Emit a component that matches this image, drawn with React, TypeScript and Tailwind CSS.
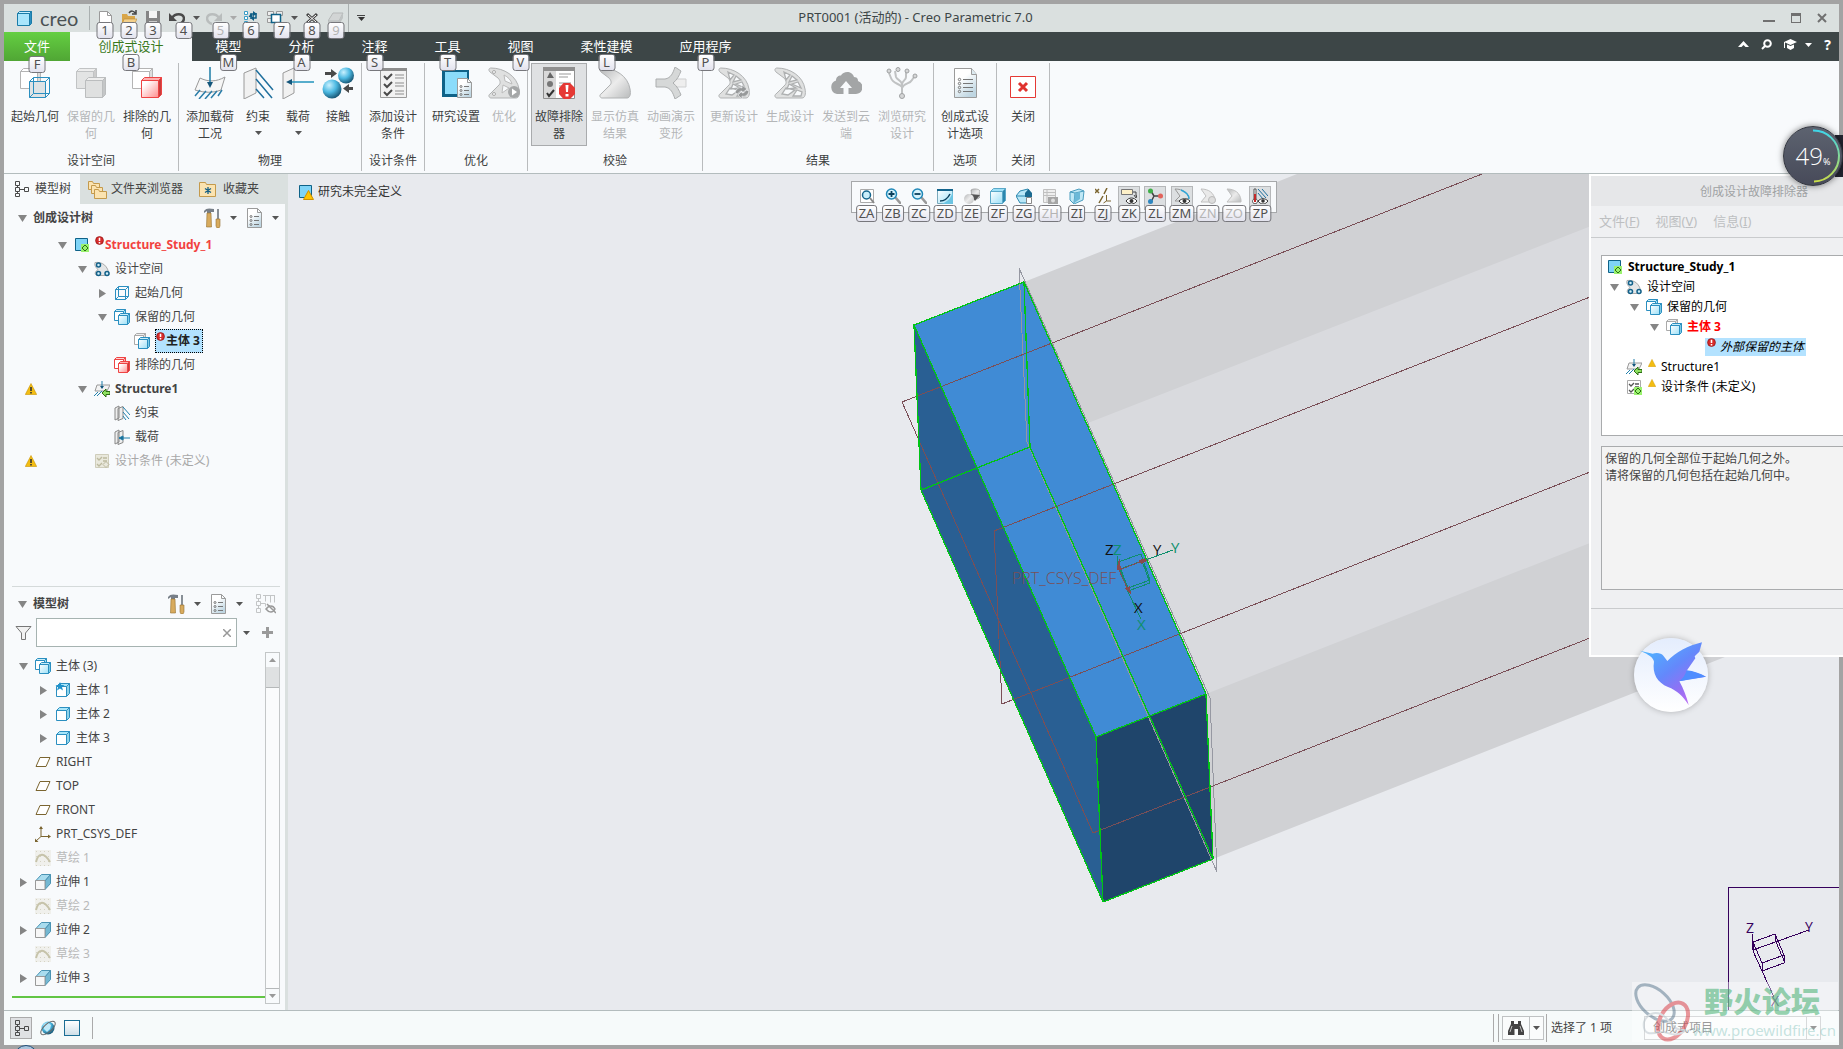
import type { ReactNode } from "react";
import { useState } from "react";
import { clsx } from "clsx";

/* ---------- small building blocks ---------- */

const Svg = ({ size = 16, children }: { size?: number; children: ReactNode }) => (
  <svg
    width={size}
    height={size}
    viewBox={`0 0 ${size} ${size}`}
    fill="none"
    aria-hidden="true"
    className="shrink-0"
  >
    {children}
  </svg>
);

type CubeProps = {
  x: number;
  y: number;
  s: number;
  d?: number;
  stroke: string;
  front?: string;
  top?: string;
  side?: string;
};

const Cube = ({ x, y, s, d = 3, stroke, front = "#fff", top = "#fff", side = "#ddd" }: CubeProps) => (
  <g stroke={stroke} strokeLinejoin="round">
    <path d={`M${x} ${y + d}l${d} ${-d}h${s - d}l${-d} ${d}z`} fill={top} />
    <path d={`M${x + s - d} ${y + d}l${d} ${-d}v${s - d}l${-d} ${d}z`} fill={side} />
    <path d={`M${x} ${y + d}h${s - d}v${s - d}h${d - s}z`} fill={front} />
  </g>
);

const WireCube = ({ x, y, s, d = 4 }: { x: number; y: number; s: number; d?: number }) => (
  <path
    d={`M${x} ${y + d}l${d} ${-d}h${s - d}v${s - d}l${-d} ${d}h${d - s}zM${x} ${y + d}h${s - d}v${s - d}M${x + s - d} ${y + d}l${d} ${-d}M${x + d} ${y}v${s - d}h${s - d}M${x} ${y + s}l${d} ${-d}`}
    stroke="#2b8fc0"
  />
);

const Caret = ({ color = "#555" }: { color?: string }) => (
  <svg width="7" height="4" viewBox="0 0 7 4" aria-hidden="true" className="shrink-0">
    <path d="M0 0h7L3.500 4z" fill={color} />
  </svg>
);

const KeyTip = ({ children, disabled }: { children: ReactNode; disabled?: boolean }) => (
  <span
    className={clsx(
      "flex h-[17px] min-w-[17px] items-center justify-center rounded-[3px] border border-[#77777c] bg-linear-to-b from-white to-[#e3e3ee] px-0.5 text-[13px] leading-none",
      disabled ? "text-[#b4b4b4]" : "text-[#505050]",
    )}
  >
    {children}
  </span>
);

const SharedDefs = () => (
  <svg width="0" height="0" className="absolute" aria-hidden="true">
    <defs>
      <radialGradient id="ball" cx="0.35" cy="0.3" r="0.75">
        <stop offset="0" stopColor="#c9f1ff" />
        <stop offset="0.5" stopColor="#4db9e2" />
        <stop offset="1" stopColor="#14506e" />
      </radialGradient>
      <linearGradient id="page" x1="0" y1="0" x2="0.6" y2="1">
        <stop offset="0.4" stopColor="#ffffff" />
        <stop offset="1" stopColor="#bfd6e2" />
      </linearGradient>
      <linearGradient id="grey" x1="0" y1="0" x2="1" y2="1">
        <stop offset="0" stopColor="#b3b5b6" />
        <stop offset="0.5" stopColor="#ececec" />
        <stop offset="1" stopColor="#b9bbbc" />
      </linearGradient>
      <linearGradient id="red" x1="0" y1="0" x2="1" y2="1">
        <stop offset="0.2" stopColor="#ffffff" />
        <stop offset="1" stopColor="#ff8d8d" />
      </linearGradient>
      <linearGradient id="sky" x1="0" y1="0" x2="1" y2="1">
        <stop offset="0" stopColor="#ffffff" />
        <stop offset="1" stopColor="#9ce0f7" />
      </linearGradient>
      <linearGradient id="bird" x1="0.1" y1="0" x2="0.9" y2="1">
        <stop offset="0.1" stopColor="#50b0ff" />
        <stop offset="0.45" stopColor="#6488fb" />
        <stop offset="0.7" stopColor="#9270f4" />
        <stop offset="1" stopColor="#cf6cf2" />
      </linearGradient>
      <linearGradient id="arc" x1="0" y1="0" x2="0" y2="1">
        <stop offset="0" stopColor="#3fd5e8" />
        <stop offset="1" stopColor="#c8dc4a" />
      </linearGradient>
    </defs>
  </svg>
);

/* ---------- ribbon icons, 32px ---------- */

const bracket = "M3 1C16 1 29 9 31 22c1 5 0 9-3 9H3c-2 0-3-3-1-4l9-9c2-2 1-5-1-7L2 5C0 3 1 1 3 1z";

const StartGeometryIcon = () => (
  <Svg size={32}>
    <Cube x={1.5} y={1.5} s={20} stroke="#b4b4b4" />
    <path d="M10.500 14.500h16v16h-16z" fill="#dfe3e5" />
    <WireCube x={10.5} y={10.5} s={20} />
  </Svg>
);
const KeepGeometryIcon = () => (
  <Svg size={32}>
    <Cube x={1.5} y={1.5} s={20} stroke="#c1c3c4" front="#e3e4e4" top="#eee" side="#ccc" />
    <Cube x={10.5} y={10.5} s={20} stroke="#bbbdbe" front="#dfe0e0" top="#eee" side="#c4c6c7" />
  </Svg>
);
const ExcludeGeometryIcon = () => (
  <Svg size={32}>
    <Cube x={1.5} y={1.5} s={20} stroke="#b4b4b4" />
    <Cube x={10.5} y={10.5} s={20} stroke="#ee4444" front="url(#red)" top="#ffb0b0" side="#c93c3c" />
  </Svg>
);
const LoadCaseIcon = () => (
  <Svg size={32}>
    <path d="M6 11c8 4 16 4 25-1l-4 13c-8 3-16 3-26 0z" fill="#f6f6f6" stroke="#999" />
    <path d="M16 0v17" stroke="#1c7ba6" strokeWidth="1.500" />
    <path d="M13 15h6l-3 6z" fill="#14557a" />
    <path d="M1 29l5-6M5 32l7-8M11 32l7-8M17 31l6-7M24 29l4-6" stroke="#2b7da8" strokeWidth="1.500" />
  </Svg>
);
const ConstraintIcon = () => (
  <Svg size={32}>
    <path d="M2 6l12-5v25L2 32z" fill="#f1f1f1" stroke="#9a9a9a" />
    <path d="M14 3l17 20M14 12l16 19M14 22l8 9" stroke="#1f6f9d" strokeWidth="1.500" />
  </Svg>
);
const LoadIcon = () => (
  <Svg size={32}>
    <path d="M1 6l11-5v25L1 32z" fill="#f1f1f1" stroke="#9a9a9a" />
    <path d="M7 15h25" stroke="#2293bd" strokeWidth="1.500" />
    <path d="M4 15l6-3v6z" fill="#14557a" />
  </Svg>
);
const ContactIcon = () => (
  <Svg size={32}>
    <circle cx="24" cy="8.500" r="8" fill="url(#ball)" />
    <circle cx="10" cy="22" r="9.500" fill="url(#ball)" />
    <path d="M3 5h6V2l6 4.500-6 4.500V8H3zM31 20h-4v-3l-6 4.500 6 4.500v-3h4z" fill="#4a4a4a" />
  </Svg>
);
const ConditionsIcon = () => (
  <Svg size={32}>
    <path d="M3.500 1.500h26v29h-26z" fill="#f2f2f2" stroke="#9b9b9b" />
    <path d="M3 1h27v3H3z" fill="#8d8d8d" />
    <path d="M7 9l3 3 5-5M7 17l3 3 5-5M7 25l3 3 5-5" stroke="#4a4a4a" strokeWidth="2" />
    <path d="M18 8h9M18 11h9M18 16h9M18 19h9M18 24h9M18 27h9" stroke="#8d8d8d" />
  </Svg>
);
const PageList = ({ x = 0, y = 0 }: { x?: number; y?: number }) => (
  <g transform={`translate(${x} ${y})`}>
    <path d="M.5.5h10l4 4v15H.5z" fill="url(#page)" stroke="#9b9b9b" />
    <path d="M10.500.5v4h4" stroke="#9b9b9b" />
    <path d="M7 8.500h5M7 12.500h5M7 16.500h5" stroke="#777" />
    <circle cx="4" cy="8.500" r="1" stroke="#777" />
    <circle cx="4" cy="12.500" r="1" stroke="#777" />
    <circle cx="4" cy="16.500" r="1" stroke="#777" />
  </g>
);
const StudySetupIcon = () => (
  <Svg size={32}>
    <path d="M2 3h27v27H2z" fill="#0f6288" />
    <path d="M5 5h22v22H5z" fill="#8bdcfb" />
    <PageList x={17} y={11} />
  </Svg>
);
const BracketIcon = ({ play, lattice, refresh }: { play?: boolean; lattice?: boolean; refresh?: boolean }) => (
  <Svg size={32}>
    <path d={bracket} fill={lattice || play ? "#dfe0e0" : "url(#grey)"} stroke="#b0b2b3" />
    {lattice && (
      <g fill="#f8fafc" stroke="#aeb0b1" strokeWidth="1.300">
        <path d="M10 5l6 3-4 5zM18 9l5 4-8 2zM24 15l3 6-9-4zM15 17l7 4-9 1zM12 21l9 2-7 5-6-1zM23 23l5 2-1 4h-8z" />
      </g>
    )}
    {play && (
      <g>
        <circle cx="6" cy="5" r="1.500" fill="#f8fafc" stroke="#aaa" />
        <circle cx="6" cy="27" r="1.500" fill="#f8fafc" stroke="#aaa" />
        <path d="M16 8c4 2 7 5 8 9l-7-3zM15 18l6 3-7 5z" fill="#f8fafc" stroke="#bbb" />
        <circle cx="26" cy="25" r="6" fill="#a5a7a8" />
        <path d="M24 21.500l5 3.500-5 3.500z" fill="#fff" />
      </g>
    )}
    {refresh && (
      <path
        d="M17 26c1-5 5-6 7-5v-3l5 4-5 4v-2c-2 0-3 1-4 3zM31 24c-1 5-5 6-7 5v3l-4-4 4-4v2c2 0 3-1 4-3z"
        fill="#97999a"
        stroke="#f8fafc"
        strokeWidth="0.500"
      />
    )}
  </Svg>
);
const TroubleshootIcon = () => (
  <Svg size={32}>
    <path d="M.5 1.500h31v30H.5z" fill="#fff" stroke="#8f8f8f" />
    <path d="M0 0h32v4H0z" fill="#8f8f8f" />
    <path d="M1 4h12v27H1z" fill="#d9d9d9" />
    <path d="M4 11l3-6 4 6z" fill="#666" />
    <circle cx="7" cy="17" r="3" fill="#777" />
    <path d="M4 26l2 3 5-6" stroke="#333" strokeWidth="2" />
    <path d="M16 7h12M16 10h9M16 16h12M16 19h8M16 25h5" stroke="#999" />
    <path d="M20.500 16h6.500l5 5v6l-5 5h-6.500l-4.500-5v-6z" fill="#e53935" />
    <path d="M22.500 18h3l-.5 7h-2zM22.500 27h3v2.500h-3z" fill="#fff" />
  </Svg>
);
const AnimateIcon = () => (
  <Svg size={32}>
    <path d="M14 12h17v8H14z" fill="#eee" stroke="#cfd0d1" />
    <path
      d="M1 12h9c6-1 8-6 10-12l6 4c-2 5-4 9-8 12 4 3 6 7 8 12l-6 4c-2-6-4-11-10-12H1z"
      fill="#d6d8d8"
      stroke="#acaeaf"
    />
  </Svg>
);
const CloudIcon = () => (
  <Svg size={32}>
    <path
      d="M7 27a7 7 0 0 1-1-13.500C6 9 10 8 11 8.500 13 4 22 3 24 10c4 0 4 3 4 4a6.700 6.700 0 0 1-2 13z"
      fill="#a3a5a6"
    />
    <path d="M16 14l6 7h-3.500v6h-5v-6H10z" fill="#f8fafc" />
  </Svg>
);
const BranchIcon = () => (
  <Svg size={32}>
    <path
      d="M16 27V17c-1-4-5-4-6-7L9 4M16 20c-3-4-9-3-11-9L3 6M16 17c1-4 4-4 4-7V4M16 21c2-5 8-4 10-8l2-3"
      stroke="#c0c2c3"
      strokeWidth="2"
    />
    <g fill="#d5d6d7" stroke="#9fa1a2">
      <circle cx="3" cy="4" r="2" />
      <circle cx="12" cy="2.500" r="2" />
      <circle cx="21" cy="4" r="2" />
      <circle cx="29" cy="9" r="2" />
      <circle cx="16" cy="29" r="2.500" />
    </g>
  </Svg>
);
const OptionsIcon = () => (
  <Svg size={32}>
    <path d="M5.500 1.500h17l5 6v23h-22z" fill="url(#page)" stroke="#9b9b9b" />
    <path d="M22.500 1.500v6h5" fill="#dceaf0" stroke="#9b9b9b" />
    <path d="M14 12.500h10M14 16.500h10M14 20.500h10M14 24.500h10" stroke="#777" />
    {[12.5, 16.5, 20.5, 24.5].map((y) => (
      <circle key={y} cx="10.500" cy={y} r="1.200" stroke="#777" />
    ))}
  </Svg>
);
const CloseIcon = () => (
  <Svg size={32}>
    <path d="M3.500 9.500h25v21h-25z" fill="#fff" stroke="#e53935" />
    <path d="M12 16l8 8M20 16l-8 8" stroke="#e0322e" strokeWidth="3" />
  </Svg>
);

/* ---------- tree icons, 16px ---------- */

const GearMark = ({ x, y }: { x: number; y: number }) => (
  <g transform={`translate(${x} ${y})`}>
    <rect width="8" height="8" fill="#9af26e" />
    <path d="M4 1l3 3-3 3-3-3z" stroke="#2c6e14" />
  </g>
);
const StudyIcon = ({ warn }: { warn?: boolean }) => (
  <Svg>
    <path d="M1.500 1.500h12v12h-12z" fill="#7fd4f7" stroke="#0f6288" />
    {warn ? <path d="M10.500 6.500l5 9h-10z" fill="#ffc400" stroke="#d09100" /> : <GearMark x={7} y={7} />}
  </Svg>
);
const DesignSpaceIcon = () => (
  <Svg>
    <path d="M1 1.500c8-1 13 4 14 12l-2 1H3c-3-1-2-4 1-6-2-2-4-4-3-7z" fill="#e4e6e7" stroke="#aaa" />
    <g fill="#d2effa" stroke="#13618a" strokeWidth="1.500">
      <circle cx="4.500" cy="4" r="2" />
      <circle cx="4.500" cy="12.500" r="2" />
      <circle cx="13" cy="12.500" r="2" />
    </g>
  </Svg>
);
const WireIcon = () => (
  <Svg>
    <WireCube x={1.5} y={1.5} s={13} d={3} />
  </Svg>
);
const PairIcon = ({ tone }: { tone: "blue" | "grey" | "red" }) => (
  <Svg>
    <Cube
      x={0.5}
      y={0.5}
      s={11}
      d={2}
      stroke={tone === "blue" ? "#2b8fc0" : tone === "red" ? "#ee4444" : "#aaa"}
      side={tone === "blue" ? "#9ce0f7" : tone === "red" ? "#ffb0b0" : "#ddd"}
      top={tone === "blue" ? "#c8eefa" : tone === "red" ? "#ffd2d2" : "#eee"}
    />
    <Cube
      x={4.5}
      y={4.5}
      s={11}
      d={2}
      stroke={tone === "red" ? "#ee4444" : "#2b8fc0"}
      front={tone === "red" ? "url(#red)" : "url(#sky)"}
      side={tone === "red" ? "#c93c3c" : "#7cc9e4"}
      top={tone === "red" ? "#ffb0b0" : "#c8eefa"}
    />
  </Svg>
);
const StructureIcon = () => (
  <Svg>
    <path d="M3 4h13l-3 6H1z" fill="#f3f3f3" stroke="#999" />
    <path d="M8 0v7M0 15l4-4M3 15l5-5" stroke="#1f7faa" />
    <path d="M6 5h4L8 8z" fill="#14557a" />
    <path d="M16 10.500h-4V8l-4 4 4 4v-2.500h4z" fill="#8ee060" stroke="#2c6e14" />
  </Svg>
);
const PhysicsIcon = ({ load }: { load?: boolean }) => (
  <Svg>
    <path d="M1 3l4-2v12l-4 2zM4 3.500l5-2v12l-5 2z" fill="#eee" stroke="#888" />
    {load ? (
      <path d="M5 9h11M5 9l4-2v4z" stroke="#1f7faa" fill="#14557a" />
    ) : (
      <path d="M9 2l7 8M9 7l6 7M9 11l3 4" stroke="#1f7faa" />
    )}
  </Svg>
);
const ConditionIcon = ({ active }: { active?: boolean }) => (
  <Svg>
    <path d="M1.500 1.500h13v13h-13z" fill={active ? "#fff" : "#e9e8dc"} stroke={active ? "#aaa" : "#cfcdbb"} />
    <path
      d="M3 5l2 2 3-3M3 11l2 2 3-3M9 5h4M9 8h4"
      stroke={active ? "#555" : "#bcb99f"}
      strokeWidth="1.300"
    />
    {active ? <GearMark x={8} y={8} /> : <path d="M12 8.500l3 3-3 3-3-3z" stroke="#bcb99f" />}
  </Svg>
);
const BodyIcon = ({ star }: { star?: boolean }) => (
  <Svg>
    <Cube x={1.5} y={1.5} s={13} d={3} stroke="#2b8fc0" top="#a8e6fa" side="#8fd2e9" />
    {star && <path d="M5 0l1.300 3H9.500L7 5l1 3.500-3-2-3 2L3 5 .5 3h3.200z" fill="#1f93cc" />}
  </Svg>
);
const PlaneIcon = () => (
  <Svg>
    <path d="M5 3.500h10l-4 9H1z" fill="#fff" stroke="#7b6530" />
  </Svg>
);
const CsysIcon = () => (
  <Svg>
    <path d="M6 1v9.500h9M6 10.500L1 15" stroke="#7b6530" />
    <path d="M4 3l2-3 2 3zM13 8.500l3 2-3 2zM0 12.500V16h3.500z" fill="#7b6530" />
  </Svg>
);
const SketchIcon = () => (
  <Svg>
    <path d="M0 0h16v16H0z" fill="#f0f0ec" />
    <path d="M1 1.500h14M1 6.500h14M1 11.500h14M1 15.500h14" stroke="#d5d3c4" strokeDasharray="1 3" />
    <path d="M1 12c1-4 3-7 5-7 3-1 6 2 9 7" stroke="#c6c3aa" strokeWidth="2" />
  </Svg>
);
const ExtrudeIcon = () => (
  <Svg>
    <path d="M.5 7l6-6.500h9L10 7z" fill="#a9dcee" stroke="#4a93b3" />
    <path d="M10 7l5.500-6.500v9L10 15.500z" fill="#74b8d2" stroke="#4a93b3" />
    <path d="M.5 6.500H10v9H.5z" fill="#f7f7f7" stroke="#999" />
  </Svg>
);
const WarningIcon = ({ size = 12 }: { size?: number }) => (
  <svg width={size} height={size} viewBox="0 0 12 12" aria-hidden="true" className="shrink-0">
    <path d="M6 .5L11.700 11.500H.3z" fill="#f3bd13" stroke="#c99400" strokeWidth="0.600" />
    {size > 8 && <path d="M5.200 4h1.600v4H5.200zM5.200 9h1.600v1.500H5.200z" fill="#333" />}
  </svg>
);
const ErrorDot = () => (
  <svg width="9" height="9" viewBox="0 0 8 8" aria-hidden="true" className="mb-2.5 shrink-0">
    <circle cx="4" cy="4" r="3.500" fill="#d92b2b" stroke="#8a1010" strokeWidth="0.600" />
    <path d="M3.300 1.500h1.400v3H3.300zM3.300 5.300h1.400v1.300H3.300z" fill="#fff" />
  </svg>
);
const NodesIcon = () => (
  <Svg>
    <path
      d="M2.500 0.500h4v4h-4zM2.500 6.500h4v4h-4zM2.500 12.500h4v3h-4zM11.500 6.500h4v4h-4zM4.500 4.500v2M4.500 10.500v2M6.500 8.500h5"
      stroke="#4a4a4a"
    />
  </Svg>
);
const ToolsIcon = () => (
  <svg width="18" height="20" viewBox="0 0 18 20" aria-hidden="true">
    <path d="M1 3c2-3 5-3 10-2v3H8V5H4V3L1 5z" fill="#777f88" />
    <path d="M4 5h4l.5 14h-5z" fill="#d8ab5e" stroke="#94702f" strokeWidth="0.600" />
    <path d="M14 1h2v11h-2z" fill="#888f96" />
    <path d="M13 11h4v7l-1 2h-2l-1-2z" fill="#d8ab5e" stroke="#94702f" strokeWidth="0.600" />
  </svg>
);
const ListPageIcon = () => (
  <svg width="17" height="20" viewBox="0 0 17 20" fill="none" aria-hidden="true">
    <PageList x={1} />
  </svg>
);

/* ---------- title bar ---------- */

type QuickItem = { tip: string; label: string; icon: ReactNode; split?: boolean; disabled?: boolean };

const quickItems: QuickItem[] = [
  {
    tip: "1",
    label: "新建",
    icon: (
      <Svg>
        <path d="M2.500 1.500h8l4 4v10h-12z" fill="#fff" stroke="#9a9a9a" />
        <path d="M10.500 1.500v4h4" stroke="#9a9a9a" />
      </Svg>
    ),
  },
  {
    tip: "2",
    label: "打开",
    icon: (
      <Svg>
        <path d="M1 4h5l1 2h7v9H1z" fill="#d9a648" />
        <path d="M3 9h13l-3 6H1z" fill="#f4d08a" stroke="#b98a35" strokeWidth="0.600" />
        <path d="M8 3c2-3 5-2 6 0M15 0v4h-4" stroke="#444" strokeWidth="1.500" />
      </Svg>
    ),
  },
  {
    tip: "3",
    label: "保存",
    icon: (
      <Svg>
        <path d="M1 1h14v15H1z" fill="#858585" />
        <path d="M4 1h8v7H4z" fill="#f4f4f4" />
        <path d="M4 11h8v5H4z" fill="#ccc" />
      </Svg>
    ),
  },
  {
    tip: "4",
    label: "撤消",
    split: true,
    icon: (
      <Svg>
        <path d="M3 8c3-5 11-5 12 0 0 3-2 5-5 6" stroke="#4a4a4a" strokeWidth="2.500" />
        <path d="M0 3v8h8z" fill="#4a4a4a" />
      </Svg>
    ),
  },
  {
    tip: "5",
    label: "重做",
    split: true,
    disabled: true,
    icon: (
      <Svg>
        <path d="M13 8C10 3 2 3 1 8c0 3 2 5 5 6" stroke="#b9bdbd" strokeWidth="2.500" />
        <path d="M16 3v8H8z" fill="#b9bdbd" />
      </Svg>
    ),
  },
  {
    tip: "6",
    label: "重新生成",
    icon: (
      <Svg>
        <path d="M1.500 1.500h3v3h-3zM1.500 6.500h3v3h-3zM1.500 11.500h3v3h-3z" fill="#fff" stroke="#3b9dc6" />
        <path d="M8 9V4h3M13 3v5h-3" stroke="#0f5d85" strokeWidth="1.500" />
        <path d="M10 1l4 3-4 2zM11 5.500l-3.500 2.500 3.500 3zM5.500 7L8 3l2.500 4z" fill="#0f5d85" />
        <path d="M7 13.500h7" stroke="#888" />
      </Svg>
    ),
  },
  {
    tip: "7",
    label: "窗口",
    split: true,
    icon: (
      <Svg>
        <path d="M.5 1.500h6v4h-6zM9.500 1.500h6v4h-6zM.5 8.500h6v4h-6z" fill="#eee" stroke="#999" />
        <path d="M4.500 4.500h9v8h-9z" fill="#fff" stroke="#0f6288" strokeWidth="1.500" />
      </Svg>
    ),
  },
  {
    tip: "8",
    label: "关闭窗口",
    icon: (
      <Svg>
        <path d="M3 4l10 9M13 4L3 13" stroke="#444" strokeWidth="3" />
        <path d="M4 5l8 7M12 5l-8 7" stroke="#fff" />
      </Svg>
    ),
  },
  {
    tip: "9",
    label: "拭除",
    disabled: true,
    icon: (
      <Svg>
        <path d="M5 3h10l-4 8H0z" fill="#d2d5d5" stroke="#b5b8b8" />
        <path d="M0 11h11l4-8v5l-4 7H0z" fill="#bfc3c3" />
      </Svg>
    ),
  },
];

const TitleBar = () => (
  <header className="flex h-7 shrink-0 items-center bg-[#dae0df]">
    <div className="flex flex-1 items-center">
      <div className="flex w-[86px] items-center gap-2 border-r border-[#aab0b0] pl-[13px]">
        <svg width="15" height="15" viewBox="0 0 15 15" aria-hidden="true">
          <Cube x={0.5} y={0.5} s={14} d={2} stroke="#1b7ca8" front="#a9e6fc" top="#c9f1ff" side="#2b8fc0" />
        </svg>
        <span className="font-['Lato','Noto_Sans',sans-serif] text-[20px] leading-6 text-[#4b5254]">creo</span>
      </div>
      <div className="flex border-r border-[#aab0b0] pl-[3px]">
        {quickItems.map((item) => (
          <button
            key={item.tip}
            aria-label={item.label}
            disabled={item.disabled}
            className={clsx(
              "relative flex h-7 items-center pl-1",
              item.split ? "w-[37px] gap-2" : "w-6",
            )}
          >
            {item.icon}
            {item.split && <Caret color={item.disabled ? "#aaa" : "#555"} />}
            <span className="absolute left-1/2 top-[18px] z-20 -translate-x-1/2">
              <KeyTip disabled={item.disabled}>{item.tip}</KeyTip>
            </span>
          </button>
        ))}
      </div>
      <button aria-label="自定义快速访问工具栏" className="flex flex-col items-center gap-px pl-2">
        <span className="h-px w-2 bg-[#444]" />
        <Caret color="#333" />
      </button>
    </div>
    <h1 className="text-[13px] text-[#3d4647]">PRT0001 (活动的) - Creo Parametric 7.0</h1>
    <div className="flex flex-1 items-center justify-end gap-4 pr-3 text-[#6b6b6b]">
      <button aria-label="最小化" className="flex h-3 w-3 items-end pb-0.5">
        <span className="h-0.5 w-full bg-[#707070]" />
      </button>
      <button aria-label="最大化" className="h-2.5 w-2.5 border border-t-3 border-[#707070]" />
      <button aria-label="关闭">
        <svg width="10" height="10" viewBox="0 0 10 10" stroke="#707070" strokeWidth="2">
          <path d="M1 1l8 8M9 1L1 9" />
        </svg>
      </button>
    </div>
  </header>
);

/* ---------- tabs ---------- */

const ribbonTabs = [
  { name: "文件", tip: "F", width: "w-[66px]" },
  { name: "创成式设计", tip: "B", width: "w-[122px]" },
  { name: "模型", tip: "M", width: "w-[73px]" },
  { name: "分析", tip: "A", width: "w-[73px]" },
  { name: "注释", tip: "S", width: "w-[73px]" },
  { name: "工具", tip: "T", width: "w-[73px]" },
  { name: "视图", tip: "V", width: "w-[73px]" },
  { name: "柔性建模", tip: "L", width: "w-[99px]" },
  { name: "应用程序", tip: "P", width: "w-[99px]" },
];

const RibbonTabs = () => (
  <nav className="flex h-[29px] shrink-0 items-center bg-[#3d4647]">
    {ribbonTabs.map((tab, i) => (
      <button
        key={tab.tip}
        className={clsx(
          "relative h-full text-[13px]",
          tab.width,
          i === 0 && "bg-linear-to-b from-[#64cf42] to-[#50a634] text-white",
          i === 1 && "bg-[#f8fafc] text-[#3a7a1c]",
          i > 1 && "text-white",
        )}
      >
        {tab.name}
        <span className={clsx("absolute left-1/2 z-10 -translate-x-1/2", i === 0 ? "top-6" : "top-[22px]")}>
          <KeyTip>{tab.tip}</KeyTip>
        </span>
      </button>
    ))}
    <div className="ml-auto flex items-center gap-3 pb-1 pr-2 text-white">
      <button aria-label="最小化功能区">
        <svg width="11" height="7" viewBox="0 0 11 7">
          <path d="M0 6l5.500-6L11 6H7.500l-2-2-2 2z" fill="#fff" />
        </svg>
      </button>
      <button aria-label="搜索">
        <svg width="11" height="11" viewBox="0 0 11 11" fill="none" stroke="#fff" strokeWidth="2">
          <circle cx="6.500" cy="4.500" r="3.300" />
          <path d="M4 7L1 10" />
        </svg>
      </button>
      <button aria-label="学习中心" className="flex items-center gap-2">
        <svg width="13" height="11" viewBox="0 0 13 11" fill="#fff">
          <path d="M6.500 0L13 3 6.500 6 0 3zM3 5.500L6.500 7 10 5.500V9L6.500 11 3 9zM0 3h1v6H0z" />
        </svg>
        <Caret color="#fff" />
      </button>
      <button aria-label="帮助" className="text-sm font-bold leading-none">
        ?
      </button>
    </div>
  </nav>
);

/* ---------- ribbon ---------- */

type RibbonButton = {
  label: string;
  icon: ReactNode;
  narrow?: boolean;
  menu?: boolean;
  disabled?: boolean;
  pressed?: boolean;
};

const ribbonGroups: { name: string; items: RibbonButton[] }[] = [
  {
    name: "设计空间",
    items: [
      { label: "起始几何", icon: <StartGeometryIcon /> },
      { label: "保留的几何", icon: <KeepGeometryIcon />, disabled: true },
      { label: "排除的几何", icon: <ExcludeGeometryIcon /> },
    ],
  },
  {
    name: "物理",
    items: [
      { label: "添加载荷工况", icon: <LoadCaseIcon /> },
      { label: "约束", icon: <ConstraintIcon />, narrow: true, menu: true },
      { label: "载荷", icon: <LoadIcon />, narrow: true, menu: true },
      { label: "接触", icon: <ContactIcon />, narrow: true },
    ],
  },
  { name: "设计条件", items: [{ label: "添加设计条件", icon: <ConditionsIcon /> }] },
  {
    name: "优化",
    items: [
      { label: "研究设置", icon: <StudySetupIcon /> },
      { label: "优化", icon: <BracketIcon play />, narrow: true, disabled: true },
    ],
  },
  {
    name: "校验",
    items: [
      { label: "故障排除器", icon: <TroubleshootIcon />, pressed: true },
      { label: "显示仿真结果", icon: <BracketIcon />, disabled: true },
      { label: "动画演示变形", icon: <AnimateIcon />, disabled: true },
    ],
  },
  {
    name: "结果",
    items: [
      { label: "更新设计", icon: <BracketIcon lattice refresh />, disabled: true },
      { label: "生成设计", icon: <BracketIcon lattice />, disabled: true },
      { label: "发送到云端", icon: <CloudIcon />, disabled: true },
      { label: "浏览研究设计", icon: <BranchIcon />, disabled: true },
    ],
  },
  { name: "选项", items: [{ label: "创成式设计选项", icon: <OptionsIcon /> }] },
  { name: "关闭", items: [{ label: "关闭", icon: <CloseIcon />, narrow: true }] },
];

const Ribbon = () => (
  <section className="flex h-[113px] shrink-0 border-b border-[#b3bcbd] bg-[#f8fafc] text-xs leading-[17px] text-[#3c3f41]">
    {ribbonGroups.map((group) => (
      <div
        key={group.name}
        className="my-0.5 flex min-w-[53px] flex-col items-center border-r border-[#b9bbbd] px-[3px]"
      >
        <div className="flex">
          {group.items.map((item) => (
            <button
              key={item.label}
              disabled={item.disabled}
              aria-pressed={item.pressed}
              className={clsx(
                "flex h-[83px] flex-col items-center border pt-[3px]",
                item.narrow ? "w-10" : "w-14",
                item.pressed ? "border-[#a9abad] bg-[#dfe1e3]" : "border-transparent",
                item.disabled && "text-[#b4b6b8]",
              )}
            >
              {item.icon}
              <span className="mt-[9px] block w-12 break-all text-center">{item.label}</span>
              {item.menu && (
                <span className="mt-1.5">
                  <Caret />
                </span>
              )}
            </button>
          ))}
        </div>
        <span className="mt-1.5">{group.name}</span>
      </div>
    ))}
  </section>
);

/* ---------- left navigator ---------- */

const Expander = ({ state }: { state?: "open" | "closed" }) => (
  <span className="flex w-4 shrink-0 justify-center">
    {state && (
      <svg width="9" height="9" viewBox="0 0 9 9" fill="#858585" aria-hidden="true">
        {state === "open" ? <path d="M0 1h9L4.500 8z" /> : <path d="M1 0v9l7-4.500z" />}
      </svg>
    )}
  </span>
);

type TreeRow = {
  label: string;
  icon: ReactNode;
  indent?: string;
  state?: "open" | "closed";
  warn?: boolean;
  error?: boolean;
  selected?: boolean;
  className?: string;
};

const studyRows: TreeRow[] = [
  { label: "Structure_Study_1", icon: <StudyIcon />, indent: "pl-0", state: "open", error: true, className: "font-bold text-[#f2423f]" },
  { label: "设计空间", icon: <DesignSpaceIcon />, indent: "pl-5", state: "open" },
  { label: "起始几何", icon: <WireIcon />, indent: "pl-10", state: "closed" },
  { label: "保留的几何", icon: <PairIcon tone="blue" />, indent: "pl-10", state: "open" },
  { label: "主体 3", icon: <PairIcon tone="grey" />, indent: "pl-15", error: true, selected: true, className: "font-bold text-[#222]" },
  { label: "排除的几何", icon: <PairIcon tone="red" />, indent: "pl-10" },
  { label: "Structure1", icon: <StructureIcon />, indent: "pl-5", state: "open", warn: true, className: "font-bold" },
  { label: "约束", icon: <PhysicsIcon />, indent: "pl-10" },
  { label: "载荷", icon: <PhysicsIcon load />, indent: "pl-10" },
  { label: "设计条件 (未定义)", icon: <ConditionIcon />, indent: "pl-5", warn: true, className: "text-[#a8a8a8]" },
];

const modelRows: TreeRow[] = [
  { label: "主体 (3)", icon: <PairIcon tone="blue" />, state: "open" },
  { label: "主体 1", icon: <BodyIcon star />, indent: "pl-5", state: "closed" },
  { label: "主体 2", icon: <BodyIcon />, indent: "pl-5", state: "closed" },
  { label: "主体 3", icon: <BodyIcon />, indent: "pl-5", state: "closed" },
  { label: "RIGHT", icon: <PlaneIcon /> },
  { label: "TOP", icon: <PlaneIcon /> },
  { label: "FRONT", icon: <PlaneIcon /> },
  { label: "PRT_CSYS_DEF", icon: <CsysIcon /> },
  { label: "草绘 1", icon: <SketchIcon />, className: "text-[#b9b9b9]" },
  { label: "拉伸 1", icon: <ExtrudeIcon />, state: "closed" },
  { label: "草绘 2", icon: <SketchIcon />, className: "text-[#b9b9b9]" },
  { label: "拉伸 2", icon: <ExtrudeIcon />, state: "closed" },
  { label: "草绘 3", icon: <SketchIcon />, className: "text-[#b9b9b9]" },
  { label: "拉伸 3", icon: <ExtrudeIcon />, state: "closed" },
];

const SectionHeader = ({ title, extra }: { title: string; extra?: ReactNode }) => (
  <div className="flex h-7 items-center pl-2.5 text-xs">
    <Expander state="open" />
    <h2 className="pl-[3px] font-bold">{title}</h2>
    <div className="ml-auto flex items-center gap-[9px]">
      <button aria-label="树工具" className="flex items-center gap-[9px]">
        <ToolsIcon />
        <Caret />
      </button>
      <button aria-label="树设置" className="flex items-center gap-[9px]">
        <ListPageIcon />
        <Caret />
      </button>
      {extra}
    </div>
  </div>
);

const Navigator = () => {
  const [query, setQuery] = useState("");

  return (
    <aside className="flex w-[284px] shrink-0 flex-col border-r-3 border-[#dae0df] bg-[#f8fafc] text-xs text-[#444]">
      <div className="flex h-[30px] shrink-0 bg-[#dae0df]">
        <button className="flex w-[76px] items-center gap-1.5 bg-[#f8fafc] pl-[9px]">
          <NodesIcon />
          模型树
        </button>
        <button className="flex items-center gap-1 pl-2">
          <svg width="19" height="19" viewBox="0 0 19 19" aria-hidden="true">
            <g fill="#fbe3b0" stroke="#c49a4c">
              <path d="M.5 1.500h4l1 2h6v6H.5z" />
              <path d="M3.500 5.500h4l1 2h6v6h-11z" />
              <path d="M6.500 9.500h4l1 2h7v7h-12z" />
            </g>
          </svg>
          文件夹浏览器
        </button>
        <button className="flex items-center gap-1.5 pl-4">
          <svg width="18" height="16" viewBox="0 0 18 16" aria-hidden="true">
            <path d="M.5 1.500h6l1 2h9v12H.5z" fill="#fbe3b0" stroke="#c49a4c" />
            <path d="M9 6v7M6 7.500l6 4M12 7.500l-6 4" stroke="#145f86" strokeWidth="1.300" />
          </svg>
          收藏夹
        </button>
      </div>

      <div className="min-h-0 flex-1">
        <div className="pr-1.5">
          <SectionHeader title="创成设计树" />
        </div>
        <ul className="pt-px">
          {studyRows.map((row) => (
            <li key={row.label} className="flex h-6 items-center">
              <span className="flex w-[50px] shrink-0 justify-center pl-1">{row.warn && <WarningIcon />}</span>
              <div className={clsx("flex items-center", row.indent)}>
                <Expander state={row.state} />
                <span className="w-5 pl-1">{row.icon}</span>
                <span
                  className={clsx(
                    "ml-[5px] flex items-center gap-px",
                    row.selected && "h-6 border border-dotted border-black bg-[#b3e2ff] pr-0.5",
                    row.className,
                  )}
                >
                  {row.error && <ErrorDot />}
                  {row.label}
                </span>
              </div>
            </li>
          ))}
        </ul>
      </div>

      <div className="shrink-0 pb-1.5 pl-2 pr-[5px]">
        <div className="border-t border-[#d5dada] pt-[3px]">
          <div className="-ml-2 pr-1">
            <SectionHeader
              title="模型树"
              extra={
                <button aria-label="树列" className="pl-1">
                  <svg width="20" height="20" viewBox="0 0 20 20" fill="none" stroke="#c3c5c6" aria-hidden="true">
                    <path d="M.5.5h4v4h-4zM.5 7.500h4v4h-4zM.5 14.500h4v4h-4zM2.500 4.500v3M2.500 11.500v3M4.500 9.500h5v3M7 1.500h12M9.500 1.500v6M14.500 1.500v7M18.500 1.500v7" />
                    <path d="M10 15c3-4 7-4 9 0-2 4-6 4-9 0zM11 10l9 9" stroke="#999" strokeWidth="1.500" />
                  </svg>
                </button>
              }
            />
          </div>
        </div>
        <div className="flex h-[29px] items-center">
          <svg width="18" height="16" viewBox="0 0 18 16" fill="none" aria-hidden="true" className="ml-[3px]">
            <path d="M1 1.500h15L10.500 8v6.500h-4V8z" fill="#f1f1f1" stroke="#777" />
          </svg>
          <div className="ml-[3px] flex h-full w-[201px] items-center border border-[#a6b3b1] bg-white">
            <input
              aria-label="过滤模型树"
              value={query}
              onChange={(e) => setQuery(e.target.value)}
              className="h-full min-w-0 flex-1 px-1 outline-none"
            />
            <button aria-label="清除" onClick={() => setQuery("")} className="px-[5px]">
              <svg width="8" height="8" viewBox="0 0 8 8" stroke="#999" strokeWidth="1.500">
                <path d="M0 0l8 8M8 0L0 8" />
              </svg>
            </button>
          </div>
          <button aria-label="过滤选项" className="px-1.5">
            <Caret />
          </button>
          <button aria-label="添加过滤器" className="ml-1.5">
            <svg width="11" height="11" viewBox="0 0 11 11" fill="#9a9a9a">
              <path d="M4 0h3v4h4v3H7v4H4V7H0V4h4z" />
            </svg>
          </button>
        </div>
        <div className="mt-[5px] flex">
          <div className="flex flex-1 flex-col pb-1.5">
            <ul className="pt-0.5">
              {modelRows.map((row) => (
                <li key={row.label} className={clsx("flex h-6 items-center", row.indent)}>
                  <span className="ml-[3px]">
                    <Expander state={row.state} />
                  </span>
                  <span className="w-6 pl-1">{row.icon}</span>
                  <span className={clsx("pl-px", row.className)}>{row.label}</span>
                </li>
              ))}
            </ul>
            <div className="mt-1.5 h-0.5 bg-[#62c544]" />
          </div>
          <div className="flex w-[15px] flex-col border border-[#c3c6c7]" aria-hidden="true">
            <div className="flex h-3.5 rotate-180 items-center justify-center">
              <Caret color="#999" />
            </div>
            <div className="h-5 bg-[#dfe1e2]" />
            <div className="flex-1 border-y border-[#b5b8b9] bg-[#fafbfc]" />
            <div className="flex h-3.5 items-center justify-center">
              <Caret color="#999" />
            </div>
          </div>
        </div>
      </div>
    </aside>
  );
};

/* ---------- graphics area ---------- */

const viewTools: { tip: string; icon: ReactNode; active?: boolean; disabled?: boolean }[] = [
  {
    tip: "ZA",
    icon: (
      <Svg>
        <path d="M1.500 1.500h13v13h-13z" fill="#fff" stroke="#aaa" />
        <circle cx="7.500" cy="7" r="4" fill="#c9eefb" stroke="#14658d" strokeWidth="1.500" />
        <path d="M11 10l4 5" stroke="#888" strokeWidth="2" />
      </Svg>
    ),
  },
  {
    tip: "ZB",
    icon: (
      <Svg>
        <path d="M10 9l6 7" stroke="#999" strokeWidth="2.500" />
        <circle cx="6.500" cy="6" r="5" fill="#d6f3fd" stroke="#1f88b8" strokeWidth="1.500" />
        <path d="M3.500 6h6M6.500 3v6" stroke="#0b405c" strokeWidth="1.800" />
      </Svg>
    ),
  },
  {
    tip: "ZC",
    icon: (
      <Svg>
        <path d="M10 9l6 7" stroke="#999" strokeWidth="2.500" />
        <circle cx="6.500" cy="6" r="5" fill="#d6f3fd" stroke="#1f88b8" strokeWidth="1.500" />
        <path d="M3.500 6h6" stroke="#0b405c" strokeWidth="1.800" />
      </Svg>
    ),
  },
  {
    tip: "ZD",
    icon: (
      <Svg>
        <path d="M.5 1.500h15v14H.5z" fill="url(#sky)" stroke="#7aa9bb" />
        <path d="M16 3v13H4c7-2 10-6 12-13z" fill="#6cc4e2" />
        <path d="M0 1h16v2H0z" fill="#14658d" />
        <path d="M3 13c5 0 8-3 10-7" stroke="#0b405c" strokeWidth="1.500" />
      </Svg>
    ),
  },
  {
    tip: "ZE",
    icon: (
      <Svg>
        <path d="M7 2c3-2 8-1 9 1v6c-2 3-6 2-8 1z" fill="url(#grey)" stroke="#777" strokeWidth="0.500" />
        <path d="M6 6l10 1-5 6z" fill="#555" />
        <circle cx="5" cy="11" r="5" fill="url(#grey)" />
      </Svg>
    ),
  },
  {
    tip: "ZF",
    icon: (
      <Svg>
        <Cube x={0.5} y={0.5} s={15} d={3} stroke="#5ba9c9" front="url(#sky)" top="#9ce0f7" side="#2b87ae" />
      </Svg>
    ),
  },
  {
    tip: "ZG",
    icon: (
      <Svg>
        <path d="M4 3l8-2 3 6-3 8H4L0 8z" fill="#b9e7f7" stroke="#2b87ae" />
        <path d="M0 8h15" stroke="#2b87ae" />
        <path d="M9 5l3.500-4L16 5v4H9z" fill="#1a6a90" />
        <path d="M10.500 9.500h5v6h-5z" fill="#fff" stroke="#888" />
      </Svg>
    ),
  },
  {
    tip: "ZH",
    disabled: true,
    icon: (
      <Svg>
        <path d="M1.500 1.500h12v13h-12zM1.500 4.500h12M1.500 7.500h12M5 1.500v13" fill="#eee" stroke="#c0c0c0" />
        <path d="M6 9h10v7H6z" fill="#a5a5a5" />
        <circle cx="11" cy="12.500" r="2" fill="#ddd" />
      </Svg>
    ),
  },
  {
    tip: "ZI",
    icon: (
      <Svg>
        <path d="M1 4l9-3 5 2-1 9-9 4-4-4z" fill="#bfe8f6" stroke="#4a9dbf" />
        <path d="M1 4l5 1 9-2M6 5l-1 10" stroke="#4a9dbf" />
        <path d="M6 5l5-1v7l-6 4z" fill="#6bb9d8" />
      </Svg>
    ),
  },
  {
    tip: "ZJ",
    icon: (
      <Svg>
        <path d="M0 1l4 4M4 1L0 5M12 0l-3 6M8 8l-4 7" stroke="#7b6530" strokeWidth="1.500" />
        <path d="M11.500 7v6H16M11.500 13l-3 2" stroke="#7b6530" />
      </Svg>
    ),
  },
  {
    tip: "ZK",
    active: true,
    icon: (
      <Svg>
        <path d="M.5 1.500h11v5H.5z" fill="#fdf0c8" stroke="#777" />
        <path d="M12 4h3v4M13 7l2 3 1-3" stroke="#444" />
        <path d="M5 13c3-4 8-4 11 0-3 4-8 4-11 0z" fill="#fff" stroke="#333" />
        <circle cx="10.500" cy="13" r="2" fill="#333" />
      </Svg>
    ),
  },
  {
    tip: "ZL",
    active: true,
    icon: (
      <Svg>
        <path d="M7 8L4 3M7 8h6M7 8l-3 6" stroke="#444" strokeWidth="1.500" />
        <circle cx="3.500" cy="3" r="2.500" fill="#3fae49" />
        <circle cx="13.500" cy="8" r="2.500" fill="#e2635c" />
        <circle cx="3.500" cy="13.500" r="2.500" fill="#2c86c0" />
      </Svg>
    ),
  },
  {
    tip: "ZM",
    active: true,
    icon: (
      <Svg>
        <path d="M1 1c8 0 13 4 14 9L8 13H1l5-5z" fill="#dfe3e4" stroke="#999" />
        <path d="M7 2c5 2 8 5 8 9" stroke="#2fa5d6" strokeWidth="1.500" />
        <path d="M5 13c3-3 8-3 11 0-3 4-8 4-11 0z" fill="#fff" stroke="#333" />
        <circle cx="10.500" cy="13" r="2" fill="#333" />
      </Svg>
    ),
  },
  {
    tip: "ZN",
    disabled: true,
    icon: (
      <Svg>
        <path d="M1 1c8 0 13 4 14 11v2H1l5-6z" fill="#e9e9e9" stroke="#c0c0c0" />
        <circle cx="12" cy="12" r="3.500" fill="#ddd" stroke="#bbb" />
      </Svg>
    ),
  },
  {
    tip: "ZO",
    disabled: true,
    icon: (
      <Svg>
        <path d="M1 1c8 0 13 4 14 11v2H1l5-6z" fill="url(#grey)" stroke="#c0c0c0" />
      </Svg>
    ),
  },
  {
    tip: "ZP",
    active: true,
    icon: (
      <Svg>
        <path d="M2 1h2v10a2.500 2.500 0 1 1-2 0z" fill="#fff" stroke="#555" />
        <path d="M3 6v8" stroke="#c62828" strokeWidth="2" />
        <path d="M6 1l8 9M6 5l5 6M10 1l6 7" stroke="#1f6f9d" />
        <path d="M6 13c3-3 7-3 10 0-3 4-7 4-10 0z" fill="#fff" stroke="#333" />
        <circle cx="11" cy="13" r="1.800" fill="#333" />
      </Svg>
    ),
  },
];

const Scene = () => (
  <svg
    viewBox="288 174 1551 836"
    preserveAspectRatio="xMidYMid slice"
    className="absolute inset-0 h-full w-full font-['Open_Sans','Noto_Sans',sans-serif]"
    fill="none"
    aria-label="PRT0001"
  >
    {/* translucent start body */}
    <path d="M1024 282L1297 174H1839V612L1213 859L1206 694z" fill="#d0d1d4" />
    <path d="M1088 423L1839 129V445L1206 694z" fill="#d9dade" />

    {/* selected body */}
    <path d="M914 325L921 490L1103 902L1096 737z" fill="#295f93" />
    <path d="M914 325L1024 282L1206 694L1096 737z" fill="#408bd5" />
    <path d="M1096 737L1206 694L1213 859L1103 902z" fill="#1f456b" />

    <g shapeRendering="crispEdges">
      <path d="M1019 268L1210 698L1217 872L1027 442z" stroke="#9698a2" />
      <path
        d="M1482 174L902 402L1093 833L1590 638M1590 297L994 531L1002 704L1590 472"
        stroke="#7a4f57"
      />
      <path
        d="M914 325L921 490L1103 902L1213 859L1206 694L1024 282zM914 325L1096 737L1103 902M1096 737L1206 694M1024 282L1030 447L921 490M1030 447L1213 859"
        stroke="#00c416"
        strokeWidth="1.300"
      />

      {/* coordinate system */}
      <g stroke="#0e8f6c">
        <path d="M1118 562l23-8 9 26-22 8zM1120 569l22-8 8 22-22 8zM1140 562l33-12M1127 590l14 29M1117 568v-12" />
      </g>
      <path d="M1119 570l26-10M1119 570v-11M1119 570l9 20" stroke="#7a4f57" />
      <path d="M1138 561l7-3 2 3-6 3zM1117 570l1-10 4 10zM1124 588l6-2 1 9z" fill="#8a4a4e" />
    </g>
    <g fontSize="15">
      <text x="1012" y="584" fontSize="16" fontWeight="300" fill="#7a4f57">
        PRT_CSYS_DEF
      </text>
      <text x="1105" y="555" fill="#111">Z</text>
      <text x="1113" y="555" fill="#0e8f6c">Z</text>
      <text x="1153" y="555" fill="#111">Y</text>
      <text x="1171" y="553" fill="#0e8f6c">Y</text>
      <text x="1134" y="613" fill="#111">X</text>
      <text x="1137" y="630" fill="#0e8f6c">X</text>
    </g>

    {/* view orientation triad */}
    <g stroke="#36005c" shapeRendering="crispEdges">
      <path d="M1728 1010V887H1839" />
      <path d="M1753 942l22-8 9 21-22 8zM1753 942v9l9 20 22-8v-8M1762 963v8M1775 934l1 8 9 21M1753 950l56-20M1753 950l-1-16M1762 971l12 26" />
    </g>
    <g fontSize="14" fill="#36005c">
      <text x="1746" y="933">Z</text>
      <text x="1805" y="932">Y</text>
      <text x="1771" y="1006">X</text>
    </g>
  </svg>
);

const GraphicsArea = () => (
  <main className="relative min-w-0 flex-1 overflow-hidden bg-[#e8eaee]">
    <Scene />
    <div className="relative flex items-start">
      <p className="flex flex-1 items-center gap-1 pl-2.5 pt-2 text-xs leading-5 text-[#333]">
        <StudyIcon warn />
        研究未完全定义
      </p>
      <div className="mt-[7px] flex h-8 w-[426px] justify-between border border-[#a6a8aa] bg-[#f8fafc] px-1 pt-1">
        {viewTools.map((tool) => (
          <button
            key={tool.tip}
            aria-label={tool.tip}
            disabled={tool.disabled}
            className={clsx(
              "relative flex h-6 w-[22px] justify-center border pt-px",
              tool.active ? "border-[#b5b7b9] bg-[#dcdfe1]" : "border-transparent",
            )}
          >
            {tool.icon}
            <span className="absolute left-1/2 top-[18px] -translate-x-1/2">
              <KeyTip disabled={tool.disabled}>{tool.tip}</KeyTip>
            </span>
          </button>
        ))}
      </div>
      <div className="flex-1 pr-2.5" />
    </div>
  </main>
);

/* ---------- troubleshooter window ---------- */

const issueRows: { label: string; icon?: ReactNode; indent: string; open?: boolean; warn?: boolean; className?: string }[] = [
  { label: "Structure_Study_1", icon: <StudyIcon />, indent: "pl-[5px]", className: "font-bold" },
  { label: "设计空间", icon: <DesignSpaceIcon />, indent: "pl-1", open: true },
  { label: "保留的几何", icon: <PairIcon tone="blue" />, indent: "pl-6", open: true },
  { label: "主体 3", icon: <PairIcon tone="grey" />, indent: "pl-11", open: true, className: "font-bold text-[#ff0000]" },
  { label: "外部保留的主体", indent: "pl-[103px]", className: "bg-[#b3e2ff] italic px-0.5" },
  { label: "Structure1", icon: <StructureIcon />, indent: "pl-6", warn: true },
  { label: "设计条件 (未定义)", icon: <ConditionIcon active />, indent: "pl-6", warn: true },
];

const Troubleshooter = () => (
  <section
    aria-label="创成设计故障排除器"
    className="absolute right-0 top-[174px] flex h-[483px] w-[254px] flex-col overflow-hidden border-2 border-r-0 border-white bg-[#eff0f2] text-xs"
  >
    <h2 className="h-[30px] bg-[#e6e7e9] pl-[109px] leading-[32px] text-[#a0a2a4]">创成设计故障排除器</h2>
    <nav className="flex h-8 items-center gap-4 border-b border-[#c9cbcd] pl-2 text-[13px] text-[#bdbfc1]">
      <button>
        文件(<u>F</u>)
      </button>
      <button>
        视图(<u>V</u>)
      </button>
      <button>
        信息(<u>I</u>)
      </button>
    </nav>
    <ul className="ml-2.5 mt-[17px] h-[181px] shrink-0 border border-r-0 border-[#a9abad] bg-white pt-px text-black">
      {issueRows.map((row) => (
        <li key={row.label} className={clsx("flex h-5 items-center", row.indent)}>
          {row.open && (
            <span className="mr-1">
              <Expander state="open" />
            </span>
          )}
          {row.icon}
          {row.warn && (
            <span className="mb-2 ml-1.5">
              <WarningIcon size={8} />
            </span>
          )}
          <span className={clsx("flex items-center gap-1", row.icon ? "ml-[5px]" : "h-[18px]", row.className)}>
            {!row.icon && <ErrorDot />}
            {row.label}
          </span>
        </li>
      ))}
    </ul>
    <p className="ml-2.5 mt-2.5 h-[144px] shrink-0 border border-r-0 border-[#a9abad] bg-[#f3f3f3] px-[3px] pt-[3px] leading-[17px] text-[#444]">
      保留的几何全部位于起始几何之外。
      <br />
      请将保留的几何包括在起始几何中。
    </p>
    <div className="mt-[18px] border-t border-[#c9cbcd]" />
  </section>
);

/* ---------- status bar ---------- */

const StatusBar = () => (
  <footer className="flex h-[35px] shrink-0 items-center border-t border-[#b3bcbd] bg-[#f6fafa] text-xs text-[#444]">
    <div className="flex h-[22px] items-center gap-2 border-r border-[#aaa] pl-1.5 pr-3">
      <button aria-label="显示导航器" className="flex h-[22px] w-[22px] items-center justify-center border border-[#aaa] bg-[#dfe1e3]">
        <NodesIcon />
      </button>
      <button aria-label="显示浏览器">
        <Svg>
          <circle cx="8" cy="8" r="6.500" fill="url(#ball)" />
          <path d="M4 5l4-2 3 2-1 4-3 3-3-3z" fill="#bfe9f8" />
          <ellipse cx="8" cy="8" rx="9" ry="4" transform="rotate(-42 8 8)" stroke="#666" />
        </Svg>
      </button>
      <button aria-label="全屏" className="h-4 w-4 border border-[#1b6d94] bg-linear-to-b from-white to-[#cfdfe8]" />
    </div>
    <div className="ml-auto flex items-center pr-[18px]">
      <div className="mr-[3px] h-7 w-1.5 border-x border-[#aaa]" />
      <button aria-label="搜索工具" className="flex h-6 w-[42px] items-center border border-[#bfc2c3] bg-[#fafcfc]">
        <span className="flex flex-1 justify-center">
          <Svg>
            <path d="M3 1h3v3h4V1h3v3l3 7v4h-6V9H6.500v6H0v-4l3-7z" fill="#444" />
            <path d="M4 6l-2 6M12 6l2 6" stroke="#bbb" />
          </Svg>
        </span>
        <span className="flex h-full w-3.5 items-center justify-center border-l border-[#bfc2c3]">
          <Caret />
        </span>
      </button>
      <div className="ml-0.5 h-7 w-px bg-[#aaa]" />
      <span className="w-[97px] pl-1">选择了 1 项</span>
      <div className="flex h-6 w-[177px] items-center border border-[#bfc2c3] bg-[#fafcfc]">
        <select aria-label="选择过滤器" className="h-full flex-1 appearance-none pl-2 text-[#555] outline-none">
          <option>创成式项目</option>
        </select>
        <span className="pointer-events-none flex h-full w-3.5 items-center justify-center border-l border-[#bfc2c3]">
          <Caret />
        </span>
      </div>
    </div>
  </footer>
);

/* ---------- overlays ---------- */

const UsageBall = () => (
  <div className="absolute right-0 top-[126px] flex w-[60px] items-center">
    <div className="absolute right-0 h-[42px] w-2 bg-[#22242f]" />
    <div className="relative flex h-[60px] w-[60px] items-center justify-center rounded-full border border-[#33363f] bg-linear-to-b from-[#5d6370] to-[#474a59] text-white shadow-[0_0_6px_rgba(0,0,0,0.5)]">
      <svg width="58" height="58" viewBox="0 0 58 58" fill="none" className="absolute" aria-hidden="true">
        <path d="M29 3.500a25.500 25.500 0 0 1 1 51" stroke="url(#arc)" strokeWidth="2" />
      </svg>
      <span className="font-['Open_Sans','Noto_Sans',sans-serif] text-2xl font-light leading-none">49</span>
      <span className="pt-2.5 text-[9px] leading-none">%</span>
    </div>
  </div>
);

const BirdBadge = () => (
  <button
    aria-label="迅雷"
    className="absolute right-[135px] top-[638px] h-[74px] w-[74px] rounded-full bg-linear-to-b from-[#e4edfd] to-white shadow-[0_0_6px_rgba(0,0,0,0.25)]"
  >
    <svg width="74" height="74" viewBox="0 0 222 222" aria-hidden="true">
      <path
        d="M18 38l38 9c12-4 26-2 32 6l12 16c26-26 62-46 104-56l-8 28-14 14 2 6-26 37c20 2 40 9 58 18l-50 8-30 6c12 22 22 46 28 71-18-28-36-44-62-54-32-14-48-40-42-76-2-12-14-21-42-33z"
        fill="url(#bird)"
      />
      <path d="M158 97c20 2 40 9 58 19l-80 14c12-10 18-20 22-33z" fill="#4f8dff" />
    </svg>
  </button>
);

const Watermark = () => (
  <div className="pointer-events-none absolute bottom-[7px] right-[5px] h-[60px] w-[206px] bg-white/40">
    <svg width="60" height="60" viewBox="0 0 60 60" fill="none" className="absolute" aria-hidden="true">
      <g opacity="0.5">
        <ellipse cx="23" cy="21" rx="23" ry="13" transform="rotate(42 23 21)" stroke="#55738a" strokeWidth="3" />
        <ellipse cx="41" cy="39" rx="20" ry="13" transform="rotate(-60 41 39)" stroke="#d8333b" strokeWidth="4" />
        <path d="M12 40c4-10 14-12 22-4 6 6 10 14 20 12-12 10-20 0-26 2-8 2-18 4-16-10z" stroke="#b9c3ca" strokeWidth="2" />
      </g>
    </svg>
    <div className="flex flex-col items-end text-right">
      <span className="pr-[18px] text-[29px] font-black leading-10 text-[#3fae6c]/55">野火论坛</span>
      <span className="pr-0.5 text-[15px] leading-4 text-[#6fb9b0]/40">www.proewildfire.cn</span>
    </div>
  </div>
);

export default function App() {
  return (
    <div className="relative flex h-screen flex-col overflow-hidden bg-[#a3a3a3] p-1 font-['Noto_Sans','Noto_Sans_CJK_SC',sans-serif]">
      <SharedDefs />
      <TitleBar />
      <RibbonTabs />
      <Ribbon />
      <div className="flex min-h-0 flex-1">
        <Navigator />
        <GraphicsArea />
      </div>
      <StatusBar />
      <Troubleshooter />
      <UsageBall />
      <BirdBadge />
      <Watermark />
      <div className="absolute -bottom-5 left-3.5 h-6 w-6 rounded-full border border-[#1f4f7a] bg-[#a9c4dc]" />
    </div>
  );
}
